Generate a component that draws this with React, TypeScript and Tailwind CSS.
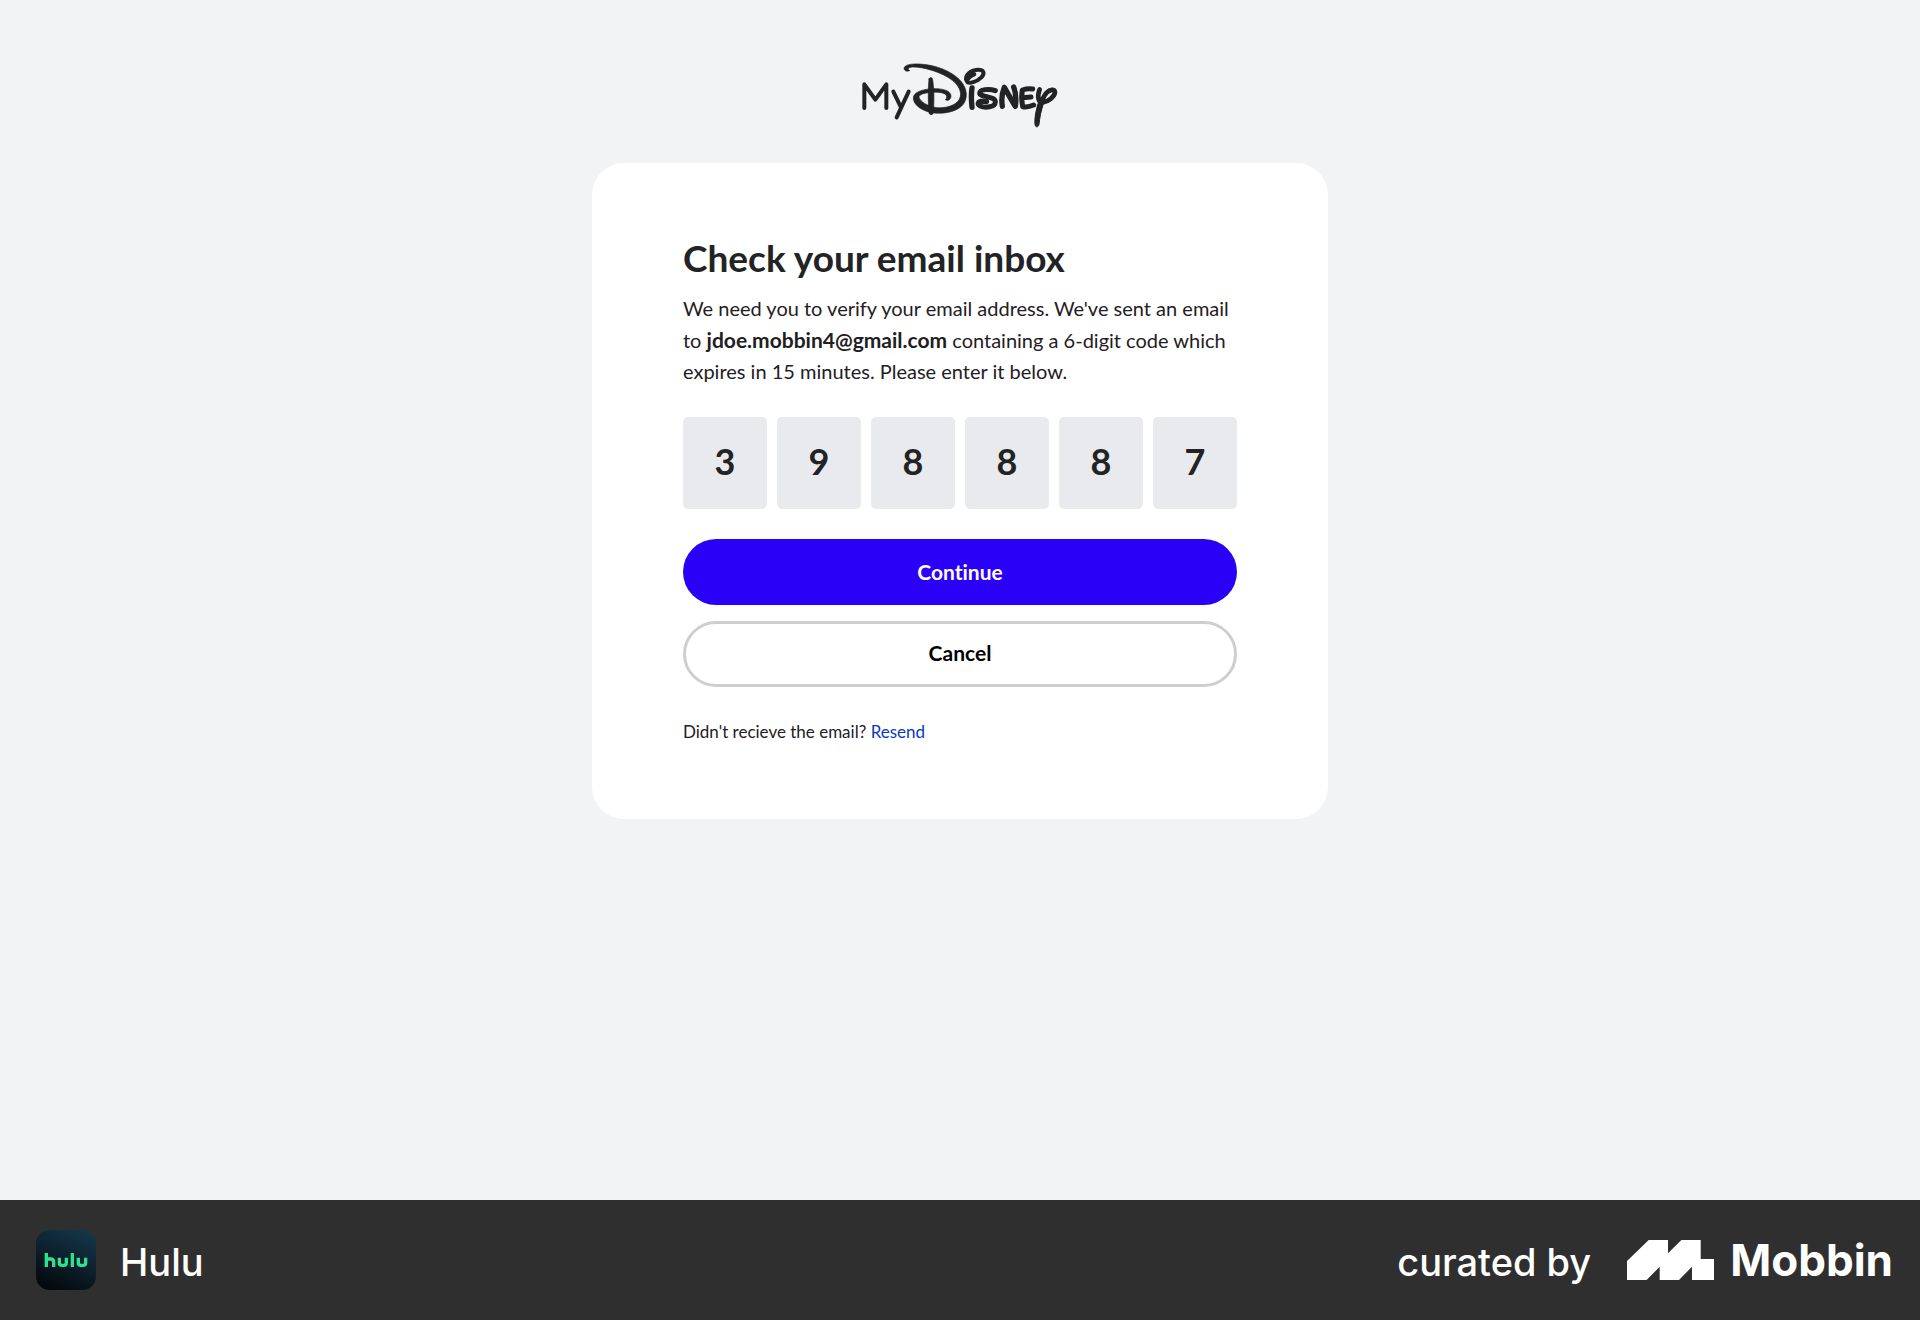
import React from "react";

const CODE = ["3", "9", "8", "8", "8", "7"];

function MyDisneyLogo() {
  return (
    <svg
      role="img"
      aria-label="MyDisney"
      viewBox="30 35 600 204"
      className="h-[68px] w-[200px] text-[#222325]"
      fill="none"
      stroke="currentColor"
      strokeLinecap="round"
      strokeLinejoin="round"
    >
      <g strokeWidth="12">
        <path d="M43 173V102L76 148L109 102V173" />
        <path d="M130 124L153 171M176 124L140 201" />
      </g>
      <path
        fill="currentColor"
        strokeWidth="2"
        d="M178 61C168 66 160 59 163 51C168 42 189 40 208 41C256 43 309 63 334 94C351 115 354 141 341 160C325 183 287 191 252 188C222 185 190 166 190 143C190 124 221 116 250 115C275 114 304 120 303 138C302 149 293 153 286 148C292 143 292 135 283 130C263 121 210 126 207 139C207 153 236 169 261 172C288 174 317 166 328 147C338 128 327 106 307 90C277 66 219 49 187 50C177 51 171 54 178 61Z"
      />
      <path
        fill="currentColor"
        strokeWidth="2"
        d="M237 86C239 79 247 80 248 88C252 115 253 150 250 187C249 195 238 195 237 187C234 155 234 115 237 86Z"
      />
      <path strokeWidth="12" d="M352 95C342 82 353 63 378 59C402 56 406 68 394 81C380 95 357 101 352 95C351 85 361 77 373 72" />
      <path strokeWidth="16" d="M366 113C363 132 364 152 366 171" />
      <path strokeWidth="15" d="M436 121C417 114 389 117 389 129C390 141 435 137 436 154C436 171 405 174 389 166C381 161 384 154 394 153L410 154" />
      <path strokeWidth="16" d="M457 168C454 148 456 127 463 111C475 132 486 152 496 168C499 147 497 125 491 110" />
      <path strokeWidth="15" d="M548 116C537 114 526 116 517 119C514 135 515 154 518 169C530 171 542 168 551 164M518 142L543 140" />
      <path strokeWidth="14" d="M569 117C561 139 564 157 579 156C594 154 613 140 615 126C614 114 599 118 590 127C580 138 573 157 569 174" />
      <path
        fill="currentColor"
        strokeWidth="3"
        d="M564 160C558 180 553 204 555 222C556 232 565 232 567 222C569 202 573 182 580 160Z"
      />
    </svg>
  );
}

function HuluIcon() {
  return (
    <svg role="img" aria-label="hulu" viewBox="0 0 180 180" className="size-15">
      <defs>
        <linearGradient id="hulu-bg" x1="0.75" y1="0" x2="0.3" y2="1">
          <stop offset="0" stopColor="#153549" />
          <stop offset="0.5" stopColor="#0c202c" />
          <stop offset="1" stopColor="#05090d" />
        </linearGradient>
      </defs>
      <rect width="180" height="180" rx="40" fill="url(#hulu-bg)" />
      <g fill="none" stroke="#2fe08f" strokeWidth="10">
        <path d="M31 69V111M31 87H44Q53 87 53 96V111" />
        <path d="M70 83V98Q70 106 78 106H83Q91 106 91 98V83" />
        <path d="M109 69V111" />
        <path d="M127 83V98Q127 106 135 106H141Q149 106 149 98V83" />
      </g>
    </svg>
  );
}

function MobbinMark() {
  return (
    <svg aria-hidden="true" viewBox="0 0 87 40" className="h-10 w-[87px]" fill="currentColor">
      <path d="M0 21L21.7 0H41V13.3L54.4 0H73.7V19H87V40H65V26.7L52 40H32.7V26.7L19.6 40H0Z" />
    </svg>
  );
}

export default function App() {
  return (
    <div className="flex min-h-screen flex-col bg-[#f1f3f5] font-['Lato',sans-serif] text-[#1f2023] [font-variant-ligatures:none]">
      <header className="flex justify-center pt-[62px]">
        <MyDisneyLogo />
      </header>

      <main className="flex flex-1 flex-col items-center pt-[33px] pb-16">
        <form
          className="w-full max-w-[736px] rounded-[32px] bg-white px-[91px] pt-[71px] pb-[73px]"
          onSubmit={(e) => e.preventDefault()}
        >
          <h1 className="text-[37px] leading-[48px] font-bold text-[#222325]">Check your email inbox</h1>
          <p className="mt-[11px] text-[20px] leading-[31px]">
            We need you to verify your email address. We've sent an email to{" "}
            <strong className="text-[21px] font-bold">jdoe.mobbin4@gmail.com</strong> containing a 6-digit code which
            expires in 15 minutes. Please enter it below.
          </p>

          <div role="group" aria-label="6-digit code" className="mt-[30px] grid grid-cols-6 gap-[10px]">
            {CODE.map((digit, i) => (
              <input
                key={i}
                aria-label={`Digit ${i + 1}`}
                defaultValue={digit}
                maxLength={1}
                inputMode="numeric"
                className="h-[92px] w-full rounded-[5px] bg-[#e9eaed] pb-1 text-center text-[36px] font-bold text-[#222325]"
              />
            ))}
          </div>

          <button type="submit" className="mt-[30px] h-[66px] w-full rounded-full bg-[#2b00f7] text-[21px] font-bold text-white">
            Continue
          </button>
          <button
            type="button"
            className="mt-4 h-[66px] w-full rounded-full border-[3px] border-[#cecece] bg-white pb-[2px] text-[21px] font-bold text-black"
          >
            Cancel
          </button>

          <p className="mt-[31px] text-[17px] leading-[28px]">
            Didn't recieve the email?{" "}
            <a href="#resend" className="text-[#0a37c4]">
              Resend
            </a>
          </p>
        </form>
      </main>

      <footer className="flex h-[120px] items-center justify-between bg-[#2f2f2f] pr-[27px] pl-9 font-['Inter',sans-serif] text-white">
        <div className="flex items-center gap-6">
          <HuluIcon />
          <span className="pt-1 text-[38px] leading-[48px] font-medium">Hulu</span>
        </div>
        <div className="flex items-center">
          <span className="pt-1 text-[38px] leading-[48px] font-medium">curated by</span>
          <div className="ml-9 flex items-center gap-4">
            <MobbinMark />
            <span className="text-[44px] leading-[48px] font-bold">Mobbin</span>
          </div>
        </div>
      </footer>
    </div>
  );
}
